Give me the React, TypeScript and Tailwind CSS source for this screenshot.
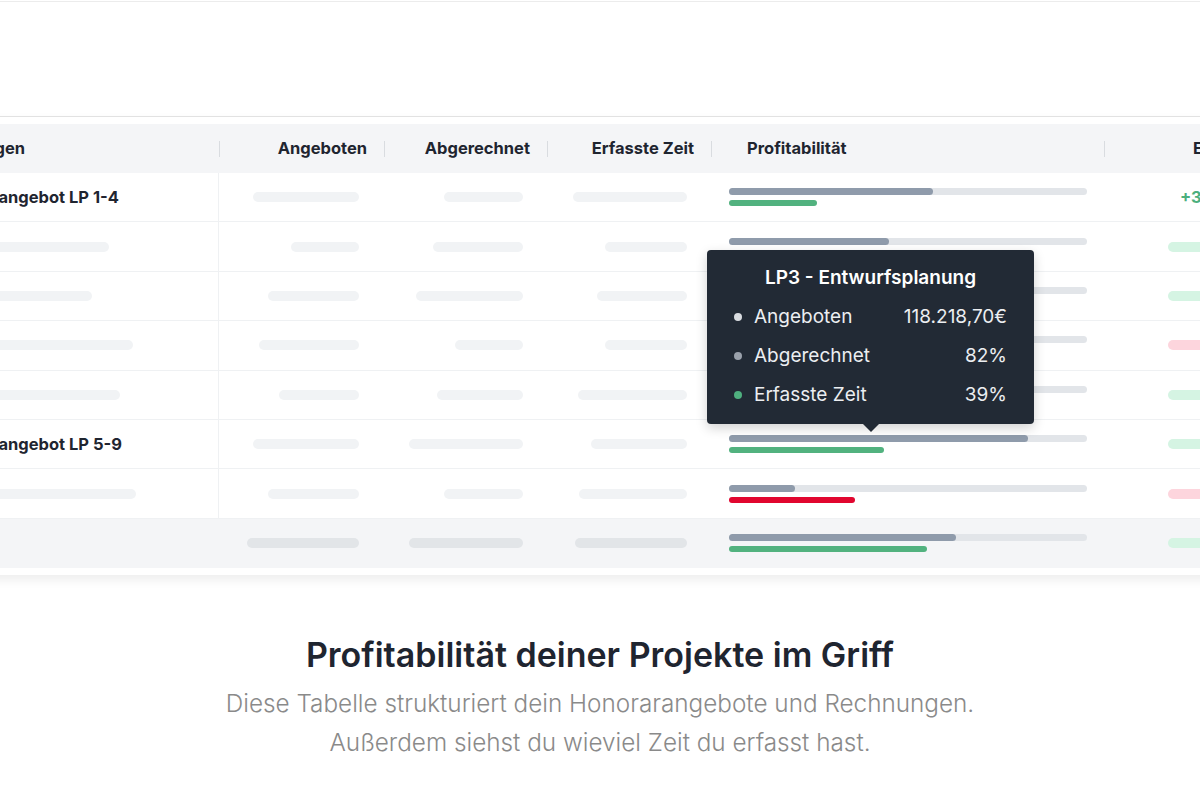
import React from "react";

type Row = {
  label?: string;
  left?: number;
  c2: number;
  c3: number;
  c4: number;
  fill: number;
  sec: number;
  secColor: "green" | "red";
  right: "text" | "green" | "pink";
};

const rows: Row[] = [
  { label: "Honorarangebot LP 1-4", c2: 106, c3: 79, c4: 114, fill: 204, sec: 88, secColor: "green", right: "text" },
  { left: 149, c2: 68, c3: 90, c4: 82, fill: 160, sec: 120, secColor: "green", right: "green" },
  { left: 132, c2: 91, c3: 107, c4: 90, fill: 230, sec: 140, secColor: "green", right: "green" },
  { left: 173, c2: 100, c3: 68, c4: 82, fill: 280, sec: 200, secColor: "red", right: "pink" },
  { left: 160, c2: 80, c3: 86, c4: 109, fill: 250, sec: 120, secColor: "green", right: "green" },
  { label: "Honorarangebot LP 5-9", c2: 106, c3: 114, c4: 96, fill: 299, sec: 155, secColor: "green", right: "green" },
  { left: 176, c2: 91, c3: 79, c4: 108, fill: 66, sec: 126, secColor: "red", right: "pink" },
];

const cols = "grid grid-cols-[419px_166px_163px_164px_393px_495px]";

function Skel({ w, dark }: { w: number; dark?: boolean }) {
  return (
    <div
      className={dark ? "h-[10px] rounded-full bg-[#e2e5e8]" : "h-[10px] rounded-full bg-[#f1f3f5]"}
      style={{ width: w }}
    />
  );
}

function Progress({ fill, sec, color }: { fill: number; sec: number; color: "green" | "red" }) {
  return (
    <div className="flex w-[358px] flex-col gap-[5px]">
      <div className="h-[7px] w-full rounded-full bg-[#e2e5e9]">
        <div className="h-[7px] rounded-full bg-[#8f9bab]" style={{ width: fill }} />
      </div>
      <div
        className={color === "green" ? "h-[6px] rounded-full bg-[#52b27f]" : "h-[6px] rounded-full bg-[#e1062f]"}
        style={{ width: sec }}
      />
    </div>
  );
}

function HeaderCell({ text }: { text: string }) {
  return (
    <div className="flex h-full items-center justify-end">
      <span className="mr-[17px]">{text}</span>
      <span className="h-[16px] w-px bg-[#d9dce0]" />
    </div>
  );
}

export default function App() {
  return (
    <div className="h-[800px] w-[1200px] overflow-hidden bg-white font-['Inter','Noto_Sans',sans-serif] text-[#1f2530]">
      <div className="h-[2px] border-b border-[#ececec]" />

      <div className="relative ml-[-200px] mt-[114px] w-[1600px] border-t border-[#e2e2e2] bg-white py-[7px] shadow-[0_5px_10px_rgba(0,0,0,0.07)]">
        {/* header */}
        <div className={`${cols} h-[49px] bg-[#f4f5f7] text-[16.5px] font-bold`}>
          <div className="flex h-full items-center justify-between pl-[135px]">
            <span>Leistungen</span>
            <span className="mr-[-1px] h-[16px] w-px bg-[#d9dce0]" />
          </div>
          <HeaderCell text="Angeboten" />
          <HeaderCell text="Abgerechnet" />
          <HeaderCell text="Erfasste Zeit" />
          <div className="flex h-full items-center justify-between pl-[35px]">
            <span>Profitabilität</span>
            <span className="h-[16px] w-px bg-[#d9dce0]" />
          </div>
          <div className="flex h-full items-center pl-[88px]">
            <span>Ergebnis</span>
          </div>
        </div>

        {/* rows */}
        {rows.map((r, i) => (
          <div key={i} className={`${cols} h-[49.4px] border-b border-[#eff1f3]`}>
            <div className="flex h-full items-center border-r border-[#eff1f3] pl-[133px]">
              {r.label ? (
                <span className="pt-[1px] text-[16.5px] font-bold">{r.label}</span>
              ) : (
                <div className="ml-[27px]">
                  <Skel w={r.left ?? 100} />
                </div>
              )}
            </div>
            <div className="flex h-full items-center justify-end pr-[26px]">
              <Skel w={r.c2} />
            </div>
            <div className="flex h-full items-center justify-end pr-[25px]">
              <Skel w={r.c3} />
            </div>
            <div className="flex h-full items-center justify-end pr-[25px]">
              <Skel w={r.c4} />
            </div>
            <div className="flex h-full items-center pl-[17px]">
              <Progress fill={r.fill} sec={r.sec} color={r.secColor} />
            </div>
            <div className="flex h-full items-center">
              {r.right === "text" ? (
                <span className="pl-[75px] text-[16.5px] font-bold text-[#4caf7d]">+3.412,50€</span>
              ) : (
                <div
                  className={
                    r.right === "green"
                      ? "ml-[63px] h-[10px] w-[90px] rounded-full bg-[#d5f4e3]"
                      : "ml-[63px] h-[10px] w-[90px] rounded-full bg-[#fdd5dd]"
                  }
                />
              )}
            </div>
          </div>
        ))}

        {/* footer */}
        <div className={`${cols} h-[49.4px] bg-[#f4f5f7]`}>
          <div />
          <div className="flex h-full items-center justify-end pr-[26px]">
            <Skel w={112} dark />
          </div>
          <div className="flex h-full items-center justify-end pr-[25px]">
            <Skel w={114} dark />
          </div>
          <div className="flex h-full items-center justify-end pr-[25px]">
            <Skel w={112} dark />
          </div>
          <div className="flex h-full items-center pl-[17px]">
            <Progress fill={227} sec={198} color="green" />
          </div>
          <div className="flex h-full items-center">
            <div className="ml-[63px] h-[10px] w-[90px] rounded-full bg-[#d5f4e3]" />
          </div>
        </div>

        {/* tooltip */}
        <div className="absolute left-[907px] top-[133px] w-[327px] rounded-[4px] bg-[#222a35] px-[27px] pb-[17px] pt-[16px] text-[19px] text-[#eceef1] shadow-[0_4px_12px_rgba(0,0,0,0.18)]">
          <div className="text-center font-semibold leading-[24px] text-white">LP3 - Entwurfsplanung</div>
          <div className="mt-[15px] flex flex-col gap-[15px] leading-[24px]">
            <div className="flex items-center">
              <span className="mr-[12px] h-[8px] w-[8px] rounded-full bg-[#d9dce0]" />
              <span>Angeboten</span>
              <span className="ml-auto">118.218,70€</span>
            </div>
            <div className="flex items-center">
              <span className="mr-[12px] h-[8px] w-[8px] rounded-full bg-[#9aa1ab]" />
              <span>Abgerechnet</span>
              <span className="ml-auto">82%</span>
            </div>
            <div className="flex items-center">
              <span className="mr-[12px] h-[8px] w-[8px] rounded-full bg-[#4fb07f]" />
              <span>Erfasste Zeit</span>
              <span className="ml-auto">39%</span>
            </div>
          </div>
          <div className="absolute bottom-[-8px] left-1/2 h-0 w-0 -translate-x-1/2 border-x-[8px] border-t-[8px] border-x-transparent border-t-[#222a35]" />
        </div>
      </div>

      {/* bottom text */}
      <div className="mt-[60px] flex flex-col items-center text-center">
        <h2 className="text-[34px] font-semibold leading-[40px] text-[#1f2530]">
          Profitabilität deiner Projekte im Griff
        </h2>
        <p className="mt-[9px] text-[24.3px] font-light leading-[39px] text-[#8a8a8a]">
          Diese Tabelle strukturiert dein Honorarangebote und Rechnungen.
          <br />
          Außerdem siehst du wieviel Zeit du erfasst hast.
        </p>
      </div>
    </div>
  );
}
